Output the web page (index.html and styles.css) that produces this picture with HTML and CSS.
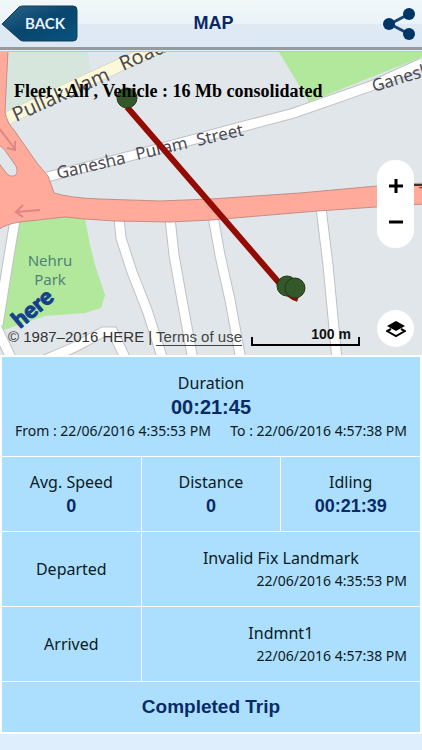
FILE: index.html
```html
<!DOCTYPE html>
<html lang="en">
  <head>
    <meta charset="UTF-8" />
    <meta name="viewport" content="width=device-width, initial-scale=1.0" />
    <title>Map</title>
    <link rel="stylesheet" href="styles.css">
  </head>
  <body>
    <header class="header">
      <button class="back" type="button" aria-label="BACK">
        <svg class="back-shape" viewBox="0 0 78 38" aria-hidden="true">
          <defs>
            <linearGradient id="backfill" x1="0" y1="0" x2="1" y2="1">
              <stop offset="0" stop-color="#2d6588" />
              <stop offset="0.5" stop-color="#07466f" />
              <stop offset="1" stop-color="#08547f" />
            </linearGradient>
          </defs>
          <path d="M1 19 L18 2 Q20 1 22 1 H72 Q76 1 76 5 V32 Q76 36 72 36 H22 Q20 36 18 34 Z" fill="url(#backfill)" stroke="#123c59" />
        </svg>
        <span class="back-text">BACK</span>
      </button>
      <h1>MAP</h1>
      <button class="share" type="button" aria-label="Share">
        <svg width="34" height="34" viewBox="0 0 34 34" aria-hidden="true">
          <path d="M27 7 L8 17 L27 27" fill="none" stroke="#174670" stroke-width="3" />
          <circle cx="27" cy="7" r="6" />
          <circle cx="7" cy="17" r="6" />
          <circle cx="27" cy="27" r="6" />
        </svg>
      </button>
    </header>

    <!-- MAP -->
    <section class="map">
      <svg class="map-canvas" viewBox="0 52 422 303" preserveAspectRatio="xMidYMid slice">
        <!-- parks -->
        <path d="M7 52 H88 L92 82 L5 120 Z" fill="#d7e6dc" />
        <path d="M279 52 H422 V57 L309 102 Z" fill="#b2e89c" />
        <path d="M20 221 L65 216 L85 219 L90 245 L95 265 L105 295 L101 308 L85 313 L45 316 L1 331 Z" fill="#b2e89c" />

        <!-- side streets, grey casing first -->
        <g class="street-edge">
          <path d="M47 177 L150 151 L294 113 L371 86 L422 63" />
          <path d="M15 220 L8 262 L-2 325" />
          <path d="M-4 326 L11 358" />
          <path d="M119 218 L121 238 L132 272 L147 310 L163 360" />
          <path d="M170 218 L174 255 L182 300 L193 360" />
          <path d="M213 216 L220 255 L230 300 L241 360" />
          <path d="M321 208 L328 265 L337 360" />
          <path d="M40 362 L75 347 L103 332 L113 332 L127 362" />
        </g>
        <g class="street">
          <path d="M47 177 L150 151 L294 113 L371 86 L422 63" />
          <path d="M15 220 L8 262 L-2 325" />
          <path d="M-4 326 L11 358" />
          <path d="M119 218 L121 238 L132 272 L147 310 L163 360" />
          <path d="M170 218 L174 255 L182 300 L193 360" />
          <path d="M213 216 L220 255 L230 300 L241 360" />
          <path d="M321 208 L328 265 L337 360" />
          <path d="M40 362 L75 347 L103 332 L113 332 L127 362" />
        </g>
        <path d="M4 120 L60 93 L118 66 L162 46" fill="none" stroke="#c9c9b8" stroke-width="13" />
        <path d="M4 120 L60 93 L118 66 L162 46" fill="none" stroke="#fcf9da" stroke-width="12" />

        <!-- main road -->
        <path d="M-2 50 H8 L5 112 Q7 123 14 130 L37 163 L48 176 Q51 184 54 193 Q70 198 100 199 L160 201 L211 199 L300 193 L377 186 L424 183 V204 L376 207 L317 211 L211 220 L170 222 L115 221 L85 219 L65 217 L20 222 Q6 224 -2 230 Z" fill="#ffaa9b" stroke="#c58d86" />
        <path d="M-2 144 L4 149 L16 166 Q19 174 14 176 Q10 177 7 174 L-2 162 Z" fill="#e0e6ea" stroke="#c58d86" />
        <path d="M-1 128 L15 149 M7 148 L15 150 L15 141" class="arrow" />
        <path d="M40 210 L16 212 M23 205 L16 212 L23 217" class="arrow" />
        <path d="M414 185 H422" stroke="#3a3238" stroke-width="2" />

        <g class="road-name">
          <text class="wide" x="16" y="122" transform="rotate(-24 16 122)">Pullakulam</text>
          <text class="wide" x="123" y="71" transform="rotate(-24 123 71)">Road</text>
          <text x="58" y="179" transform="rotate(-13 58 179)">Ganesha</text>
          <text x="137" y="160" transform="rotate(-13 137 160)">Puram</text>
          <text x="198" y="146" transform="rotate(-13 198 146)">Street</text>
          <text x="374" y="92" transform="rotate(-17 374 92)">Ganesha</text>
          <text x="419" y="199">T</text>
        </g>
        <g class="park-name">
          <text x="50" y="266">Nehru</text>
          <text x="50" y="285">Park</text>
        </g>

        <!-- trip -->
        <path d="M127 107 L281 285 Q288 296 298 299" fill="none" stroke="#930b02" stroke-width="6" />
        <g fill="#34582a" stroke="#20381b">
          <circle cx="127" cy="98" r="10" />
          <circle cx="287" cy="286" r="10" />
          <circle cx="295" cy="288" r="10" />
        </g>
        <text class="here" x="20" y="329" transform="rotate(-40 20 329)">here</text>
      </svg>

      <p class="map-title">Fleet : All , Vehicle : 16 Mb consolidated</p>

      <div class="zoom">
        <button type="button" aria-label="Zoom in">
          <svg width="16" height="16" viewBox="0 0 16 16" aria-hidden="true"><path d="M1 8 H15 M8 1 V15" /></svg>
        </button>
        <button type="button" aria-label="Zoom out">
          <svg width="16" height="16" viewBox="0 0 16 16" aria-hidden="true"><path d="M1 8 H15" /></svg>
        </button>
      </div>
      <button class="layers" type="button" aria-label="Map layers">
        <svg width="20" height="18" viewBox="0 0 20 18" aria-hidden="true">
          <path d="M10 1 L19 6 L10 11 L1 6 Z" />
          <path d="M5 9 L1 11 L10 16 L19 11 L15 9" fill="none" stroke="#000" stroke-width="2" />
        </svg>
      </button>

      <div class="map-footer">
        <span>© 1987–2016 HERE | <a href="#">Terms of use</a></span>
        <span class="scale">100 m</span>
      </div>
    </section>

    <!-- TRIP DETAILS -->
    <table class="trip">
      <tbody>
        <tr class="row-duration">
          <td colspan="3">
            <div class="label">Duration</div>
            <div class="value big">00:21:45</div>
            <div class="times">
              <span>From : 22/06/2016 4:35:53 PM</span>
              <span>To : 22/06/2016 4:57:38 PM</span>
            </div>
          </td>
        </tr>
        <tr class="row">
          <td><div class="label">Avg. Speed</div><div class="value">0</div></td>
          <td><div class="label">Distance</div><div class="value">0</div></td>
          <td><div class="label">Idling</div><div class="value">00:21:39</div></td>
        </tr>
        <tr class="row">
          <th scope="row">Departed</th>
          <td colspan="2">
            <div class="label">Invalid Fix Landmark</div>
            <div class="date">22/06/2016 4:35:53 PM</div>
          </td>
        </tr>
        <tr class="row">
          <th scope="row">Arrived</th>
          <td colspan="2">
            <div class="label">Indmnt1</div>
            <div class="date">22/06/2016 4:57:38 PM</div>
          </td>
        </tr>
        <tr class="row-status">
          <td colspan="3"><div class="value status">Completed Trip</div></td>
        </tr>
      </tbody>
    </table>
  </body>
</html>
```

FILE: styles.css
```css
* {
  box-sizing: border-box;
}
body {
  margin: 0;
  background: #deeefd;
  font-family: "Noto Sans", sans-serif;
  color: #0c1a24;
}
button {
  border: none;
  padding: 0;
  background: none;
  cursor: pointer;
}
svg {
  display: block;
}

/* header */
.header {
  display: grid;
  grid-template-columns: 1fr auto 1fr;
  align-items: center;
  height: 50px;
  padding: 2px 6px 2px 1px;
  background: linear-gradient(#f2f8fa, #eaf3f8 50%, #dfeaf4 52%, #dce8f3);
  border-bottom: 3px solid #979b9e;
}
.header h1 {
  margin: 0;
  padding-left: 10px;
  font: bold 18px "Liberation Sans", sans-serif;
  color: #0b2765;
}
.back {
  position: relative;
  width: 78px;
  height: 38px;
}
.back-shape {
  width: 100%;
}
.back-text {
  position: absolute;
  inset: 0 0 0 10px;
  font: bold 15px/36px Lato, sans-serif;
  color: #e9f1f6;
}
.share {
  justify-self: end;
  fill: #003568;
}

/* map */
.map {
  position: relative;
  height: 304px;
  border-top: 1px solid #a5cdf0;
  margin-top: 1px;
  background: #e0e6ea;
  overflow: hidden;
}
.map-canvas {
  width: 100%;
  height: 100%;
}
.street-edge path {
  fill: none;
  stroke: #bfc2c4;
  stroke-width: 11;
}
.street path {
  fill: none;
  stroke: #fff;
  stroke-width: 9;
}
.arrow {
  fill: none;
  stroke: #dc8685;
  stroke-width: 2;
}
.road-name {
  font-size: 17px;
  fill: #4b4a54;
}
.road-name .wide {
  font-size: 20px;
}
.park-name {
  font-size: 15px;
  fill: #4f8377;
  text-anchor: middle;
}
.here {
  font: 900 23px Lato, sans-serif;
  fill: #15418c;
  stroke: #15418c;
}
.map-title {
  position: absolute;
  top: 29px;
  left: 14px;
  margin: 0;
  font: bold 18px/20px "Liberation Serif", serif;
  color: #000;
}
.zoom {
  position: absolute;
  top: 108px;
  right: 8px;
  display: flex;
  flex-direction: column;
  width: 37px;
  padding: 8px 0;
  border-radius: 18px;
  background: #fff;
}
.zoom button {
  display: grid;
  place-items: center;
  height: 36px;
}
.zoom path {
  stroke: #000;
  stroke-width: 3;
}
.layers {
  position: absolute;
  right: 8px;
  bottom: 8px;
  display: grid;
  place-items: center;
  width: 37px;
  height: 37px;
  border-radius: 50%;
  background: #fff;
}
.map-footer {
  position: absolute;
  left: 8px;
  right: 62px;
  bottom: 9px;
  display: flex;
  justify-content: space-between;
  align-items: flex-end;
  font: 15px/18px "Liberation Sans", sans-serif;
  color: #333;
}
.map-footer a {
  color: #444;
  text-underline-offset: 3px;
}
.scale {
  position: relative;
  width: 109px;
  padding: 0 9px 1px 0;
  border-bottom: 2px solid #000;
  font-size: 14px;
  font-weight: bold;
  text-align: right;
  color: #111;
}
/* end ticks of the scale bar */
.scale::after {
  content: "";
  position: absolute;
  left: 0;
  right: 0;
  bottom: 0;
  height: 7px;
  border: solid #000;
  border-width: 0 2px;
}

/* trip details */
.trip {
  width: 100%;
  table-layout: fixed;
  border-collapse: separate;
  border-spacing: 1px;
  border: 1px solid #fff;
  background: #fff;
  text-align: center;
}
.trip td,
.trip th {
  padding: 0;
  background: #abdffd;
}
.trip th {
  font-size: 16px;
  font-weight: normal;
}
.row-duration {
  height: 99px;
}
.row {
  height: 74px;
}
.row-status {
  height: 50px;
}
.label {
  font-size: 16px;
  line-height: 24px;
}
.value {
  font: bold 18px/24px "Liberation Sans", sans-serif;
  color: #0a2a66;
}
.big {
  font-size: 20px;
}
.status {
  font-size: 19px;
}
.times {
  display: flex;
  justify-content: space-between;
  padding: 0 13px;
  font-size: 14px;
  line-height: 24px;
}
.date {
  padding-right: 13px;
  font-size: 14px;
  line-height: 22px;
  text-align: right;
}
```
